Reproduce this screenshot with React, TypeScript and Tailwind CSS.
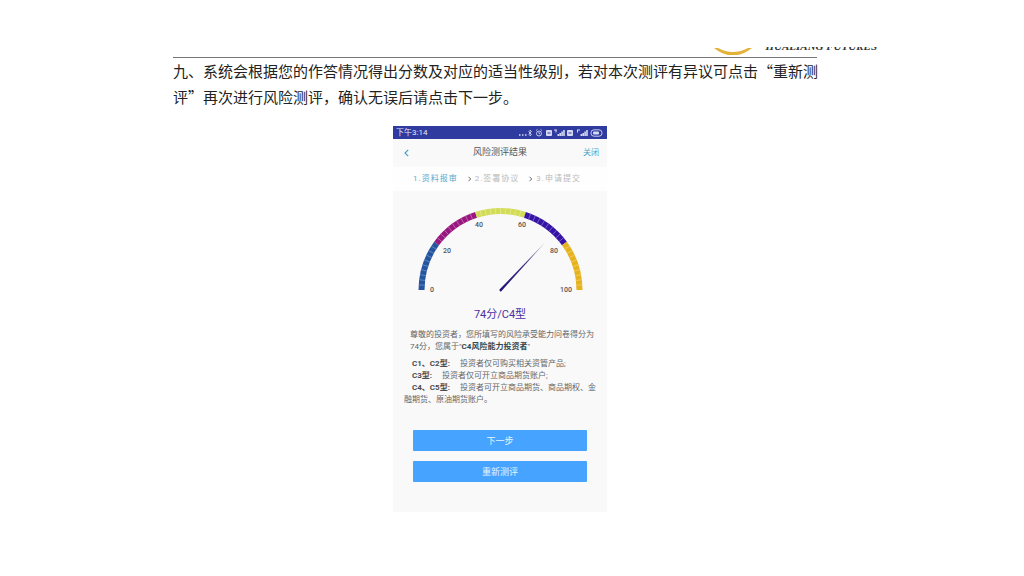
import { ReactNode } from 'react'

interface Section {
  color: string
  tick: string
}

const sections: Section[] = [
  { color: '#2655a0', tick: '#6f93c4' },
  { color: '#98187f', tick: '#c777b6' },
  { color: '#d3dc58', tick: '#e4ea92' },
  { color: '#3614a6', tick: '#8a73cf' },
  { color: '#e6b31f', tick: '#f0d070' },
]

const labels = [
  { value: 0, x: 30, y: 86 },
  { value: 20, x: 45, y: 47 },
  { value: 40, x: 77, y: 21 },
  { value: 60, x: 120, y: 21 },
  { value: 80, x: 152, y: 47 },
  { value: 100, x: 164, y: 86 },
]

const CX = 98.5
const CY = 84

function point(value: number, r: number) {
  const a = Math.PI * (1 - value / 100)
  return [CX + r * Math.cos(a), CY - r * Math.sin(a)]
}

function Gauge() {
  return (
    <svg viewBox="0 0 196 92" className="h-[92px] w-[196px]" role="img" aria-label="74">
      <defs>
        <linearGradient id="needle" gradientUnits="userSpaceOnUse" x1="97" y1="85" x2="143" y2="36">
          <stop offset="0" stopColor="#1d0f7a" />
          <stop offset="0.6" stopColor="#3a3280" />
          <stop offset="1" stopColor="#a9a9bc" />
        </linearGradient>
      </defs>
      {sections.map((s, i) => {
        const [x1, y1] = point(i * 20, 79)
        const [x2, y2] = point(i * 20 + 20, 79)
        return (
          <g key={s.color}>
            <path d={`M${x1} ${y1}A79 79 0 0 1 ${x2} ${y2}`} fill="none" stroke={s.color} strokeWidth="6" />
            {[2, 4, 6, 8, 10, 12, 14, 16, 18].map((t) => {
              const [a, b] = point(i * 20 + t, 76)
              const [c, d] = point(i * 20 + t, 82)
              return <path key={t} d={`M${a} ${b}L${c} ${d}`} stroke={s.tick} strokeWidth="0.8" />
            })}
          </g>
        )
      })}
      <path d="M97.500 83.500L144 35.500L99.300 85.200Q97.300 86 97.500 83.500Z" fill="url(#needle)" />
      {labels.map((l) => (
        <text key={l.value} x={l.x} y={l.y} textAnchor="middle" className="fill-[#555] text-[7px] font-medium">
          {l.value}
        </text>
      ))}
    </svg>
  )
}

function StatusIcons() {
  return (
    <svg viewBox="0 0 86 10" className="h-[10px] w-[86px]" fill="none" stroke="#d5d9f5">
      <path d="M1 7h1.500M4 7h1.500M7 7h1.500" strokeWidth="1.500" />
      <path d="M10.500 3.500l3 3-1.500 1.500v-6l1.500 1.500-3 3" strokeWidth="0.8" />
      <circle cx="21" cy="5.500" r="2.500" strokeWidth="0.9" />
      <path d="M21 4v1.700h1.200M18 2.500l1.500-1.200M24 2.500l-1.500-1.200" strokeWidth="0.8" />
      <g fill="#d5d9f5" stroke="none">
        <rect x="28" y="2" width="6" height="6" rx="1" />
        <path d="M36 1.500h3v1h-3zM37.500 1.500h1v3h-1zM39.500 6h1.600v2h-1.600zM41.400 5h1.600v3h-1.600zM43.300 3.500h1.600v4.500h-1.600zM45.200 2h1.600v6h-1.600z" />
        <rect x="49" y="2" width="6" height="6" rx="1" />
        <path d="M59 1.500h3v1h-3zM59 1.500h1v3h-1zM62.500 6h1.600v2h-1.600zM64.400 5h1.600v3h-1.600zM66.300 3.500h1.600v4.500h-1.600zM68.200 2h1.600v6h-1.600z" />
        <rect x="75" y="3.500" width="6" height="3" rx="1" />
      </g>
      <path d="M29.500 5h3M50.500 5h3" stroke="#3340a0" strokeWidth="1.200" />
      <rect x="73" y="1.800" width="11" height="6.400" rx="3" strokeWidth="0.9" />
    </svg>
  )
}

function Arrow() {
  return (
    <svg viewBox="0 0 5 6" className="h-[6px] w-[5px]" fill="none" stroke="#666" strokeWidth="1">
      <path d="M1.500 0.800L3.700 3L1.500 5.200" />
    </svg>
  )
}

function Action({ children }: { children: ReactNode }) {
  return (
    <button type="button" className="h-[21px] w-full rounded-[1px] bg-[#46a3ff] text-[9px] leading-3 text-[#e8f4ff]">
      {children}
    </button>
  )
}

function Phone() {
  return (
    <section className="mx-auto mt-4 w-[214px] bg-[#f9f9f9] pb-[30px] font-[Roboto,'Noto_Sans_CJK_SC',sans-serif] text-[#666]">
      <div className="flex h-[13px] items-center justify-between bg-[#2f3b9f] px-[3px] text-[8px] text-[#e3e6fa]">
        <span>下午3:14</span>
        <StatusIcons />
      </div>

      <header className="grid h-[28px] grid-cols-3 items-center px-2 text-[8px]">
        <button type="button" aria-label="返回" className="justify-self-start px-[3px]">
          <svg viewBox="0 0 5 8" className="h-2 w-[5px]" fill="none" stroke="#4a9fc4" strokeWidth="1.200">
            <path d="M4.200 0.800L1 4L4.200 7.200" />
          </svg>
        </button>
        <h2 className="justify-self-center text-[9px] whitespace-nowrap text-[#555]">风险测评结果</h2>
        <a href="#" className="justify-self-end text-[#4ba3c7]">关闭</a>
      </header>

      <ol className="flex h-[24px] items-center justify-center gap-[5px] bg-[#fefefe] pr-[6px] text-[8px] tracking-[1px] text-[#bbb]">
        <li className="text-[#58aace]">1.资料报审</li>
        <li className="flex items-center gap-[3px] pl-1"><Arrow />2.签署协议</li>
        <li className="flex items-center gap-[3px] pl-1"><Arrow />3.申请提交</li>
      </ol>

      <div className="flex justify-center pt-[15px]">
        <Gauge />
      </div>
      <p className="mt-[9px] text-center text-[11px] leading-4 text-[#4a2fa5]">74分/C4型</p>

      <div className="px-[11px] pt-[6px] text-[8px] leading-[12px]">
        <p className="pl-[6px]">
          尊敬的投资者，您所填写的风险承受能力问卷得分为74分，您属于"<b className="text-[#34494f]">C4风险能力投资者</b>"
        </p>
        <div className="mt-[5px]">
          <p className="indent-2"><b className="mr-[10px] text-[#4c4c4c]">C1、C2型:</b>投资者仅可购买相关资管产品;</p>
          <p className="indent-2"><b className="mr-[10px] text-[#4c4c4c]">C3型:</b>投资者仅可开立商品期货账户;</p>
          <p className="indent-2"><b className="mr-[10px] text-[#4c4c4c]">C4、C5型:</b>投资者可开立商品期货、商品期权、金融期货、原油期货账户。</p>
        </div>
      </div>

      <div className="mt-6 flex flex-col gap-[10px] px-5">
        <Action>下一步</Action>
        <Action>重新测评</Action>
      </div>
    </section>
  )
}

export default function App() {
  return (
    <div lang="zh-CN" className="min-h-screen bg-white pt-[47px] font-['Noto_Sans_CJK_SC',sans-serif] text-[#222]">
      <div className="flex h-[10px] items-start justify-end gap-3 pr-[147px]">
        <svg viewBox="0 0 40 8" className="h-2 w-[40px]" fill="#e3b23a">
          <path d="M1 1H5Q20 9 35 1H39Q20 16 1 1Z" />
        </svg>
        <div className="flex h-[3px] items-end overflow-hidden">
          <span className="font-['Liberation_Serif',serif] text-[11px] leading-[7px] font-bold text-[#333] italic">HUALIANG FUTURES</span>
        </div>
      </div>

      <main className="pr-[197px] pl-[173px]">
        <hr className="mr-[10px] border-[#777]" />
        <p className="text-[15px] leading-[26px]">
          九、系统会根据您的作答情况得出分数及对应的适当性级别，若对本次测评有异议可点击“重新测评”再次进行风险测评，确认无误后请点击下一步。
        </p>
        <Phone />
      </main>
    </div>
  )
}
